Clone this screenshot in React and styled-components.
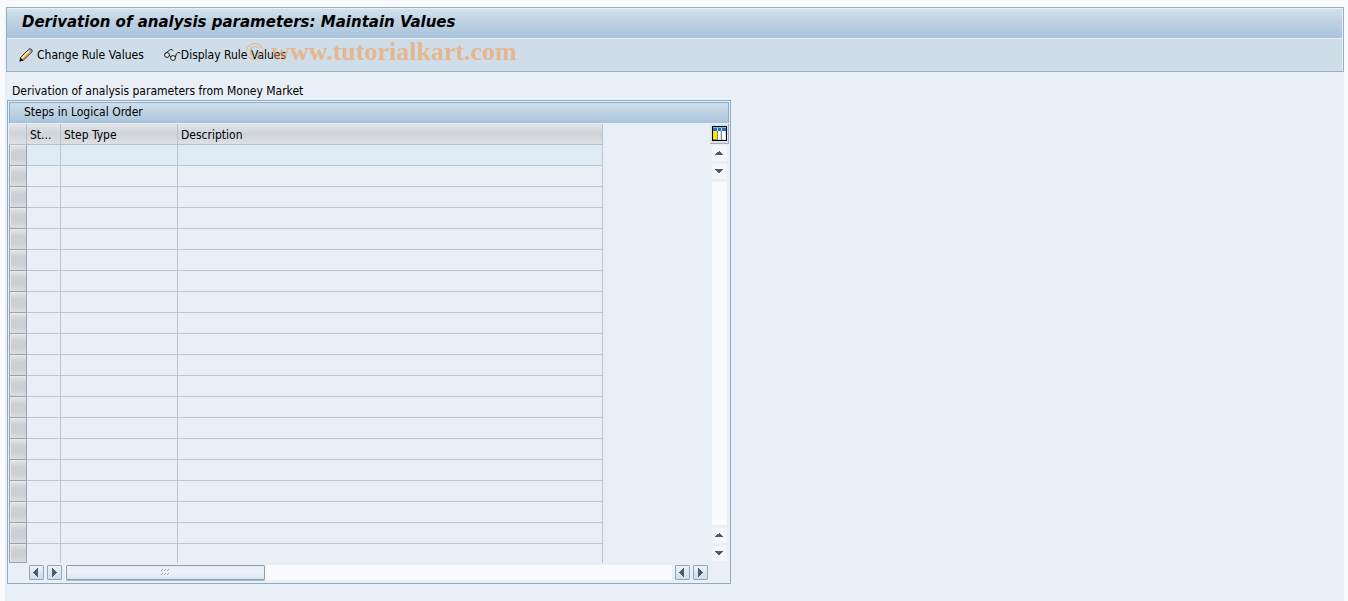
// Maintain-values screen: title bar, application toolbar and the steps table.

import React from 'react';
import styled, { createGlobalStyle } from 'styled-components';

const ROWS = Array.from({ length: 20 }, (_, i) => i);

const GlobalStyle = createGlobalStyle`
    * {
        box-sizing: border-box;
    }
    body {
        margin: 0;
        background: #f9fafd;
        color: #000;
        font-family: Tahoma, "DejaVu Sans Condensed", "DejaVu Sans", sans-serif;
        font-size: 12px;
        line-height: 16px;
    }
    button {
        font: inherit;
        color: inherit;
        padding: 0;
        cursor: pointer;
    }
`;

const Page = styled.div`
    padding: 7px 4px 0 5px;
`;

const Screen = styled.main`
    min-height: calc(100vh - 7px);
    padding-left: 1px;
    background: #e8eff6;
`;

const Header = styled.header`
    position: relative;
    border: 1px solid #9badc1;
`;

const Title = styled.h1`
    margin: 0;
    height: 31px;
    padding: 3px 15px;
    border: solid #e8eff6;
    border-width: 1px 1px 1px 0;
    background: linear-gradient(#d3e1ed, #bfd2e2 40%, #a9c3dc);
    font-family: "DejaVu Sans", sans-serif;
    font-size: 15px;
    line-height: 20px;
    font-weight: bold;
    font-style: italic;
`;

const Toolbar = styled.div`
    display: flex;
    gap: 20px;
    height: 32px;
    padding: 0 12px;
    border-right: 1px solid #e8eff6;
    background: #cfdde8;
`;

const ToolButton = styled.button`
    display: flex;
    align-items: center;
    gap: ${(p) => p.$gap};
    border: 0;
    background: none;
`;

const Watermark = styled.div`
    position: absolute;
    top: 29px;
    left: 238px;
    color: #f5994a;
    opacity: 0.55;
    font-family: "Liberation Serif", serif;
    font-size: 26px;
    line-height: 30px;
    white-space: nowrap;
    pointer-events: none;
`;

const Caption = styled.p`
    margin: 0;
    padding: 11px 6px 1px;
`;

const Group = styled.section`
    max-width: 724px;
    margin-left: 1px;
    padding: 1px 1px 3px;
    border: 1px solid #8daac6;
`;

const GroupTitle = styled.h2`
    margin: 0 0 1px;
    height: 21px;
    padding: 1px 14px;
    border: solid #8daac6;
    border-width: 1px 1px 0;
    background: linear-gradient(#d0dfeb, #a9c3dc);
    font-size: 12px;
    line-height: 16px;
    font-weight: normal;
`;

const GridArea = styled.div`
    display: flex;
    justify-content: space-between;
`;

const Table = styled.table`
    width: 594px;
    table-layout: fixed;
    border-collapse: separate;
    border-spacing: 0;
`;

const HeadCell = styled.th`
    width: ${(p) => p.$width};
    height: 21px;
    padding: 2px 2px 0 3px;
    border: solid #b6c0cd;
    border-width: 0 1px 1px 0;
    background: linear-gradient(#e1e4e7, #cfd3d9 50%, #dde0e4);
    font-weight: normal;
    text-align: left;
    white-space: nowrap;
`;

const Cell = styled.td`
    height: 21px;
    padding: 0;
    border: solid #bcc6d4;
    border-width: 0 1px 1px 0;

    tr:first-child > & {
        background: #deebf5;
    }
    tr:last-child > & {
        height: 18px;
        border-bottom: 0;
    }
`;

const SelectorCell = styled.td`
    padding: 0;
`;

const RowSelector = styled.button`
    display: block;
    width: 18px;
    height: ${(p) => (p.$last ? '19px' : '21px')};
    border: solid #98a2b2;
    border-width: 0 1px 1px;
    background: linear-gradient(#e3e5e8, #cbd0d7 35%, #cbd0d7 70%, #dadde1);
    box-shadow: inset 1px 1px #e6e9ed;
`;

const SideColumn = styled.div`
    display: flex;
    flex-direction: column;
    align-items: center;
    width: 19px;
`;

const ConfigButton = styled.button`
    width: 19px;
    height: 20px;
    margin-bottom: 2px;
    border: solid #a3adb9;
    border-width: 0 1px 1px 0;
    background: #dfe3e6;

    svg {
        display: block;
        margin: 0 auto;
    }
`;

const ScrollBar = styled.div`
    flex: 1;
    display: flex;
    flex-direction: column;
    gap: 3px;
    width: 15px;
    padding-bottom: 2px;
`;

const FlatArrow = styled.button`
    display: grid;
    place-items: center;
    width: 15px;
    height: 15px;
    border: 0;
    background: #f3f7fb;
`;

const Track = styled.div`
    flex: 1;
    background: #fafbfc;
`;

const BottomBar = styled.div`
    display: flex;
    gap: 3px;
    padding: 2px 21px 0 20px;
`;

const RaisedArrow = styled(FlatArrow)`
    border: 1px solid #93a5b7;
    border-radius: 1px;
    background: linear-gradient(#eaf2f8, #cddde8);
`;

const BottomTrack = styled(Track)`
    padding-left: 1px;
`;

const Thumb = styled.button`
    display: grid;
    place-items: center;
    width: 199px;
    max-width: 60%;
    height: 15px;
    border: 1px solid #8a9fb4;
    border-radius: 1px;
    background: linear-gradient(#e6edf6, #edf2fa 50%, #dce5ef);
    box-shadow: 0 1px #a9b8c7;
`;

// Boxes have odd sides so that they centre on whole pixels in the 15px buttons
const ARROWS = {
    up: 'M4 1h1v1h1v1h1v1h1v1H0V4h1V3h1V2h2z',
    down: 'M0 1h8v1H7v1H6v1H5v1H3V4H2V3H1V2H0z',
    left: 'M5 0v9H4V8H3V7H2V6H1V5H0V4h1V3h1V2h1V1h1V0z',
    right: 'M1 0h1v1h1v1h1v1h1v1h1v1H5v1H4v1H3v1H2v1H1z',
};

const Arrow = ({ dir }) => {
    const vertical = dir === 'up' || dir === 'down';
    return (
        <svg width={vertical ? 9 : 7} height={vertical ? 7 : 9} shapeRendering="crispEdges">
            <path d={ARROWS[dir]} fill="#4c5e6e" />
        </svg>
    );
};

const PencilIcon = () => (
    <svg width="14" height="14" viewBox="0 0 14 14">
        <path d="M2 9.500L9.500 2l2.500 2.500L4.500 12z" fill="#f0a52a" />
        <path d="M2.500 9.500L9.500 2.500l1 1L3.500 10.500z" fill="#ffedbd" />
        <path d="M8.500 2.500L10 1h2l1 1v1.700L11.600 5z" fill="#a9bdd8" />
        <path d="M11 1h1.500v2z" fill="#d9695f" />
        <path d="M1.500 9.500L9.500 1.500 11 .6l2.200 1.600-.4 2L4.500 12 1 13z" fill="none" stroke="#3a3a3a" />
        <path d="M.5 13.500l1-4 3 3z" fill="#111" />
    </svg>
);

const GlassesIcon = () => (
    <svg width="17" height="14" viewBox="0 0 17 14" fill="none" stroke="#1b1b1b">
        <circle cx="3" cy="7" r="2.4" fill="#eef3f7" />
        <circle cx="9" cy="10" r="2.4" fill="#eef3f7" />
        <path d="M5.300 7.500L7 8.600M.8 5.800L3 4.200 6.500 1.500H8l1 1.200M11.300 9.300l1-3.300L14 4.500h1.500l.8 1.300" />
    </svg>
);

const ColumnsIcon = () => (
    <svg width="15" height="15" viewBox="0 0 15 15" shapeRendering="crispEdges">
        <path fill="#000" d="M0 0h15v15H0z" />
        <path fill="#d8dce2" d="M1 1h13v13H1z" />
        <path fill="#65c4f4" d="M1 1h13v1H1z" />
        <path fill="#2b6fc0" d="M1 2h4v3H1zM6 2h3v3H6zM10 2h4v3h-4z" />
        <path fill="#ffe800" d="M1 5h4v8H1z" />
        <path fill="#a58a20" d="M1 13h4v1H1z" />
        <path fill="#fff" d="M6 5h2v8H6zM10 5h3v8h-3z" />
        <path fill="#7d858f" d="M5 5h1v9H5zM9 5h1v9H9z" />
    </svg>
);

const Grip = () => (
    <svg width="9" height="7" shapeRendering="crispEdges">
        <path fill="#9aa9bb" d="M1 0h1v1H1zM4 0h1v1H4zM7 0h1v1H7zM0 1h1v1H0zM3 1h1v1H3zM6 1h1v1H6zM1 4h1v1H1zM4 4h1v1H4zM7 4h1v1H7zM0 5h1v1H0zM3 5h1v1H3zM6 5h1v1H6z" />
    </svg>
);

const StepsTable = () => (
    <Table aria-labelledby="steps-title">
        <thead>
            <tr>
                <HeadCell $width="18px" />
                <HeadCell $width="34px" title="Step">St...</HeadCell>
                <HeadCell $width="117px">Step Type</HeadCell>
                <HeadCell $width="425px">Description</HeadCell>
            </tr>
        </thead>
        <tbody>
            {ROWS.map((row) => (
                <tr key={row}>
                    <SelectorCell>
                        <RowSelector
                            aria-label={`Select row ${row + 1}`}
                            $last={row === ROWS.length - 1}
                        />
                    </SelectorCell>
                    <Cell />
                    <Cell />
                    <Cell />
                </tr>
            ))}
        </tbody>
    </Table>
);

const App = () => (
    <Page>
        <GlobalStyle />
        <Screen>
            <Header>
                <Title>Derivation of analysis parameters: Maintain Values</Title>
                <Toolbar>
                    <ToolButton $gap="4px"><PencilIcon />Change Rule Values</ToolButton>
                    <ToolButton $gap="0"><GlassesIcon />Display Rule Values</ToolButton>
                </Toolbar>
                <Watermark>© <b>www.tutorialkart.com</b></Watermark>
            </Header>

            <Caption>Derivation of analysis parameters from Money Market</Caption>

            <Group>
                <GroupTitle id="steps-title">Steps in Logical Order</GroupTitle>
                <GridArea>
                    <StepsTable />
                    <SideColumn>
                        <ConfigButton aria-label="Configuration"><ColumnsIcon /></ConfigButton>
                        <ScrollBar>
                            <FlatArrow aria-label="Scroll up"><Arrow dir="up" /></FlatArrow>
                            <FlatArrow aria-label="Next line"><Arrow dir="down" /></FlatArrow>
                            <Track />
                            <FlatArrow aria-label="Previous line"><Arrow dir="up" /></FlatArrow>
                            <FlatArrow aria-label="Scroll down"><Arrow dir="down" /></FlatArrow>
                        </ScrollBar>
                    </SideColumn>
                </GridArea>
                <BottomBar>
                    <RaisedArrow aria-label="Scroll left"><Arrow dir="left" /></RaisedArrow>
                    <RaisedArrow aria-label="Next column"><Arrow dir="right" /></RaisedArrow>
                    <BottomTrack>
                        <Thumb aria-label="Scroll position"><Grip /></Thumb>
                    </BottomTrack>
                    <RaisedArrow aria-label="Previous column"><Arrow dir="left" /></RaisedArrow>
                    <RaisedArrow aria-label="Scroll right"><Arrow dir="right" /></RaisedArrow>
                </BottomBar>
            </Group>
        </Screen>
    </Page>
);

export default App;
